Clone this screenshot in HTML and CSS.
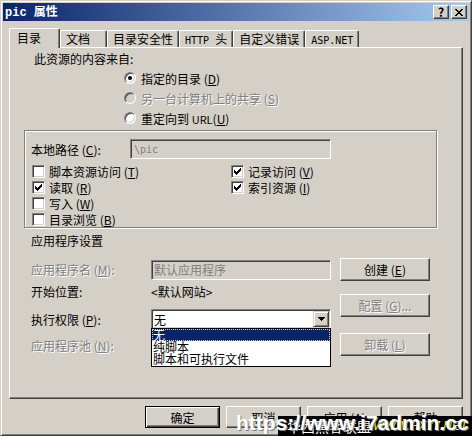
FILE: index.html
```html
<!DOCTYPE html>
<html lang="zh-CN">

<head>
    <meta charset="UTF-8">
    <meta name="viewport" content="width=device-width, initial-scale=1.0">
    <title>pic 属性</title>
    <link rel="stylesheet" href="styles.css">
</head>

<body>
    <div class="window">
        <div class="titlebar">
            <span class="title"><span class="title-en">pic </span>属性</span>
            <div class="title-btns">
                <span class="tbtn">?</span>
                <span class="tbtn">
                    <svg width="8" height="7" viewBox="0 0 8 7"><path d="M0 0h2v1H0zM6 0h2v1H6zM1 1h2v1H1zM5 1h2v1H5zM2 2h4v1H2zM3 3h2v1H3zM2 4h4v1H2zM1 5h2v1H1zM5 5h2v1H5zM0 6h2v1H0zM6 6h2v1H6z"/></svg>
                </span>
            </div>
        </div>

        <div class="tabs">
            <div class="tab active">目录</div>
            <div class="tab">文档</div>
            <div class="tab">目录安全性</div>
            <div class="tab"><span class="en">HTTP </span>头</div>
            <div class="tab">自定义错误</div>
            <div class="tab"><span class="en">ASP.NET</span></div>
        </div>

        <div class="panel">
            <div class="source-label">此资源的内容来自:</div>
            <div class="radios">
                <div class="radio-row"><span class="radio checked"></span><span>指定的目录 (<u>D</u>)</span></div>
                <div class="radio-row disabled"><span class="radio"></span><span>另一台计算机上的共享 (<u>S</u>)</span></div>
                <div class="radio-row"><span class="radio"></span><span>重定向到 <span class="en-txt">URL</span>(<u>U</u>)</span></div>
            </div>

            <div class="group">
                <div class="path-row">
                    <span class="path-label">本地路径 (<u>C</u>):</span>
                    <span class="textbox disabled"><span class="en">\pic</span></span>
                </div>
                <div class="checks">
                    <div class="check-col">
                        <div class="check-row"><span class="check"></span><span>脚本资源访问 (<u>T</u>)</span></div>
                        <div class="check-row"><span class="check"><svg width="7" height="7" viewBox="0 0 7 7"><path d="M6 0h1v1H6zM5 1h2v1H5zM0 2h1v1H0zM4 2h3v1H4zM0 3h2v1H0zM3 3h3v1H3zM0 4h5v1H0zM1 5h3v1H1zM2 6h1v1H2z"/></svg></span><span>读取 (<u>R</u>)</span></div>
                        <div class="check-row"><span class="check"></span><span>写入 (<u>W</u>)</span></div>
                        <div class="check-row"><span class="check"></span><span>目录浏览 (<u>B</u>)</span></div>
                    </div>
                    <div class="check-col">
                        <div class="check-row"><span class="check"><svg width="7" height="7" viewBox="0 0 7 7"><path d="M6 0h1v1H6zM5 1h2v1H5zM0 2h1v1H0zM4 2h3v1H4zM0 3h2v1H0zM3 3h3v1H3zM0 4h5v1H0zM1 5h3v1H1zM2 6h1v1H2z"/></svg></span><span>记录访问 (<u>V</u>)</span></div>
                        <div class="check-row"><span class="check"><svg width="7" height="7" viewBox="0 0 7 7"><path d="M6 0h1v1H6zM5 1h2v1H5zM0 2h1v1H0zM4 2h3v1H4zM0 3h2v1H0zM3 3h3v1H3zM0 4h5v1H0zM1 5h3v1H1zM2 6h1v1H2z"/></svg></span><span>索引资源 (<u>I</u>)</span></div>
                    </div>
                </div>
            </div>

            <div class="section-label">应用程序设置</div>
            <div class="app">
                <div class="app-fields">
                    <div class="field-row app-name">
                        <span class="field-label disabled-text">应用程序名 (<u>M</u>):</span>
                        <span class="textbox disabled">默认应用程序</span>
                    </div>
                    <div class="field-row app-start">
                        <span class="field-label">开始位置:</span>
                        <span>&lt;默认网站&gt;</span>
                    </div>
                    <div class="field-row app-perm">
                        <span class="field-label">执行权限 (<u>P</u>):</span>
                        <span class="combo">
                            <span class="combo-value">无</span>
                            <span class="combo-arrow"><svg width="7" height="4" viewBox="0 0 7 4"><path d="M0 0h7v1H0zM1 1h5v1H1zM2 2h3v1H2zM3 3h1v1H3z"/></svg></span>
                        </span>
                    </div>
                    <div class="field-row app-pool">
                        <span class="field-label disabled-text">应用程序池 (<u>N</u>):</span>
                    </div>
                </div>
                <div class="app-buttons">
                    <div class="btn btn-create"><span>创建 (<u>E</u>)</span></div>
                    <div class="btn btn-config disabled-text"><span>配置 (<u>G</u>)...</span></div>
                    <div class="btn btn-unload disabled-text"><span>卸载 (<u>L</u>)</span></div>
                </div>
            </div>

            <!-- open list of the 执行权限 combo -->
            <div class="dropdown">
                <div class="dropdown-item selected">无</div>
                <div class="dropdown-item">纯脚本</div>
                <div class="dropdown-item">脚本和可执行文件</div>
            </div>
        </div>

        <div class="footer">
            <div class="btn btn-wide default">确定</div>
            <div class="btn btn-wide">取消</div>
            <div class="btn btn-wide"><span>应用 (<u>A</u>)</span></div>
            <div class="btn btn-wide">帮助</div>
        </div>
    </div>

    <div class="wm-box"></div>
    <div class="wm-cn">华西黑客联盟</div>
    <div class="wm-net">WWW.HX77.NET</div>
    <div class="wm-url">https://www.i7admin.cc</div>
</body>

</html>
```

FILE: styles.css
```css
* {
    box-sizing: border-box;
}

body {
    margin: 0;
    width: 472px;
    height: 436px;
    position: relative;
    overflow: hidden;
    font-family: "Noto Sans CJK SC", sans-serif;
    font-size: 12px;
    color: #000;
    background: #d4d0c8;
}

u {
    text-underline-offset: 1px;
}

.en {
    font-family: "DejaVu Sans Mono", monospace;
    font-size: 10px;
    white-space: pre;
}

.en-txt {
    font-size: 11px;
}

.window {
    width: 472px;
    height: 436px;
    padding: 2px;
    border: 1px solid;
    border-color: #d4d0c8 #404040 #404040 #d4d0c8;
    box-shadow: inset 1px 1px #fff, inset -1px -1px #808080;
    background: #d4d0c8;
}

/* title bar */

.titlebar {
    display: flex;
    align-items: center;
    height: 18px;
    padding-left: 2px;
    background: linear-gradient(to right, #0a246a, #a6caf0);
    color: #fff;
    font-weight: bold;
}

.title {
    line-height: 18px;
}

.title-en {
    font-family: "Liberation Mono", monospace;
    font-size: 12px;
    white-space: pre;
}

.title-btns {
    display: flex;
    gap: 2px;
    margin-left: auto;
    padding-right: 2px;
}

.tbtn {
    display: flex;
    align-items: center;
    justify-content: center;
    width: 16px;
    height: 14px;
    background: #d4d0c8;
    border: 1px solid;
    border-color: #fff #404040 #404040 #fff;
    box-shadow: inset -1px -1px #808080;
    color: #000;
    font-weight: bold;
    line-height: 12px;
}

/* tabs */

.tabs {
    display: flex;
    align-items: flex-end;
    height: 19px;
    margin: 7px 0 0 6px;
    position: relative;
    z-index: 1;
}

.tab {
    height: 17px;
    min-width: 47px;
    padding: 0 5px;
    border: 1px solid;
    border-bottom: none;
    border-color: #fff #404040 #fff #fff;
    border-radius: 2px 2px 0 0;
    box-shadow: inset -1px 0 #808080;
    line-height: 16px;
    white-space: nowrap;
}

.tab.active {
    height: 20px;
    min-width: 51px;
    padding-left: 7px;
    margin-bottom: -1px;
    background: #d4d0c8;
    line-height: 17px;
}

/* page */

.panel {
    position: relative;
    width: 454px;
    height: 352px;
    margin-left: 6px;
    border: 1px solid;
    border-color: #fff #404040 #404040 #fff;
    box-shadow: inset -1px -1px #808080;
}

.source-label {
    height: 14px;
    margin: 4px 0 0 24px;
    line-height: 14px;
}

.radios {
    margin: 2px 0 0 114px;
}

.radio-row {
    display: flex;
    align-items: center;
    gap: 5px;
    height: 20px;
}

.radio {
    display: flex;
    align-items: center;
    justify-content: center;
    width: 12px;
    height: 12px;
    border-radius: 50%;
    background: #fff;
    border: 1px solid;
    border-color: #808080 #fff #fff #808080;
    box-shadow: inset 1px 1px #404040, inset -1px -1px #d4d0c8;
}

.radio.checked::after {
    content: "";
    width: 4px;
    height: 4px;
    border-radius: 50%;
    background: #000;
}

.disabled,
.disabled-text {
    color: #808080;
    text-shadow: 1px 1px #fff;
}

.radio-row.disabled .radio {
    background: #d4d0c8;
}

.group {
    width: 413px;
    height: 98px;
    margin: 2px 0 0 14px;
    border: 1px solid #808080;
    box-shadow: inset 1px 1px #fff, 1px 1px #fff;
}

.path-row {
    display: flex;
    align-items: center;
    height: 20px;
    margin-top: 8px;
    padding-left: 6px;
}

.path-label {
    width: 99px;
}

.textbox {
    display: flex;
    align-items: center;
    height: 20px;
    padding-left: 3px;
    background: #fff;
    border: 1px solid;
    border-color: #808080 #fff #fff #808080;
    box-shadow: inset 1px 1px #404040, inset -1px -1px #d4d0c8;
    white-space: nowrap;
}

.path-row .textbox {
    width: 201px;
}

.textbox.disabled {
    background: #d4d0c8;
    text-shadow: none;
}

.checks {
    display: flex;
    margin-top: 4px;
    padding-left: 7px;
}

.check-col {
    width: 199px;
}

.check-row {
    display: flex;
    align-items: center;
    gap: 4px;
    height: 16px;
}

.check {
    display: flex;
    align-items: center;
    justify-content: center;
    width: 13px;
    height: 13px;
    background: #fff;
    border: 1px solid;
    border-color: #808080 #fff #fff #808080;
    box-shadow: inset 1px 1px #404040, inset -1px -1px #d4d0c8;
}

.section-label {
    height: 14px;
    margin: 6px 0 0 21px;
    line-height: 14px;
}

/* application settings */

.app {
    display: flex;
    margin-left: 21px;
}

.app-fields {
    width: 300px;
}

.field-row {
    display: flex;
    align-items: center;
    height: 20px;
}

.field-label {
    width: 120px;
    flex-shrink: 0;
}

.field-row .textbox {
    width: 180px;
    padding-left: 2px;
}

.app-name {
    height: 21px;
    margin-top: 11px;
}

.app-start {
    margin-top: 1px;
}

.app-perm {
    margin-top: 8px;
}

.app-pool {
    margin-top: 6px;
}

.combo {
    display: flex;
    align-items: center;
    width: 180px;
    height: 20px;
    padding: 1px;
    background: #fff;
    border: 1px solid;
    border-color: #808080 #fff #fff #808080;
    box-shadow: inset 1px 1px #404040, inset -1px -1px #d4d0c8;
}

.combo-value {
    flex: 1;
    padding-left: 1px;
}

.combo-arrow {
    display: flex;
    align-items: center;
    justify-content: center;
    width: 16px;
    height: 16px;
    background: #d4d0c8;
    border: 1px solid;
    border-color: #d4d0c8 #404040 #404040 #d4d0c8;
    box-shadow: inset 1px 1px #fff, inset -1px -1px #808080;
}

.app-buttons {
    width: 90px;
    margin-left: 9px;
}

.btn {
    display: flex;
    align-items: center;
    justify-content: center;
    height: 23px;
    background: #d4d0c8;
    border: 1px solid;
    border-color: #fff #404040 #404040 #fff;
    box-shadow: inset -1px -1px #808080;
    white-space: nowrap;
}

.btn-create {
    margin-top: 10px;
}

.btn-config {
    margin-top: 13px;
}

.btn-unload {
    margin-top: 16px;
}

.dropdown {
    position: absolute;
    left: 141px;
    top: 280px;
    width: 180px;
    padding-bottom: 1px;
    background: #fff;
    border: 1px solid #000;
}

.dropdown-item {
    height: 12px;
    padding-left: 1px;
    line-height: 12px;
    white-space: nowrap;
}

.dropdown-item.selected {
    background: #0a246a;
    color: #fff;
    outline: 1px dotted #d4d0c8;
    outline-offset: -1px;
}

/* bottom buttons */

.footer {
    display: flex;
    justify-content: flex-end;
    gap: 6px;
    margin-top: 7px;
    padding-right: 6px;
}

.btn-wide {
    width: 75px;
    height: 22px;
}

.btn.default {
    border-color: #000;
    box-shadow: inset 1px 1px #fff, inset -1px -1px #404040, inset -2px -2px #808080;
}

/* watermark over the corner */

.wm-box {
    position: absolute;
    left: 278px;
    top: 416px;
    width: 194px;
    height: 20px;
    background: #000;
}

.wm-cn {
    position: absolute;
    left: 287px;
    top: 417px;
    color: #fff;
    font-size: 14px;
    line-height: 18px;
}

.wm-net {
    position: absolute;
    left: 373px;
    top: 419px;
    color: #ff0;
    font-family: "Liberation Sans", sans-serif;
    font-style: italic;
    font-size: 12px;
    line-height: 14px;
}

.wm-url {
    position: absolute;
    left: 236px;
    top: 412px;
    color: #fff;
    font-family: "Liberation Sans", sans-serif;
    font-weight: bold;
    font-size: 21px;
    line-height: 21px;
    text-shadow: 1px 1px 0 #808080;
    white-space: nowrap;
}
```
